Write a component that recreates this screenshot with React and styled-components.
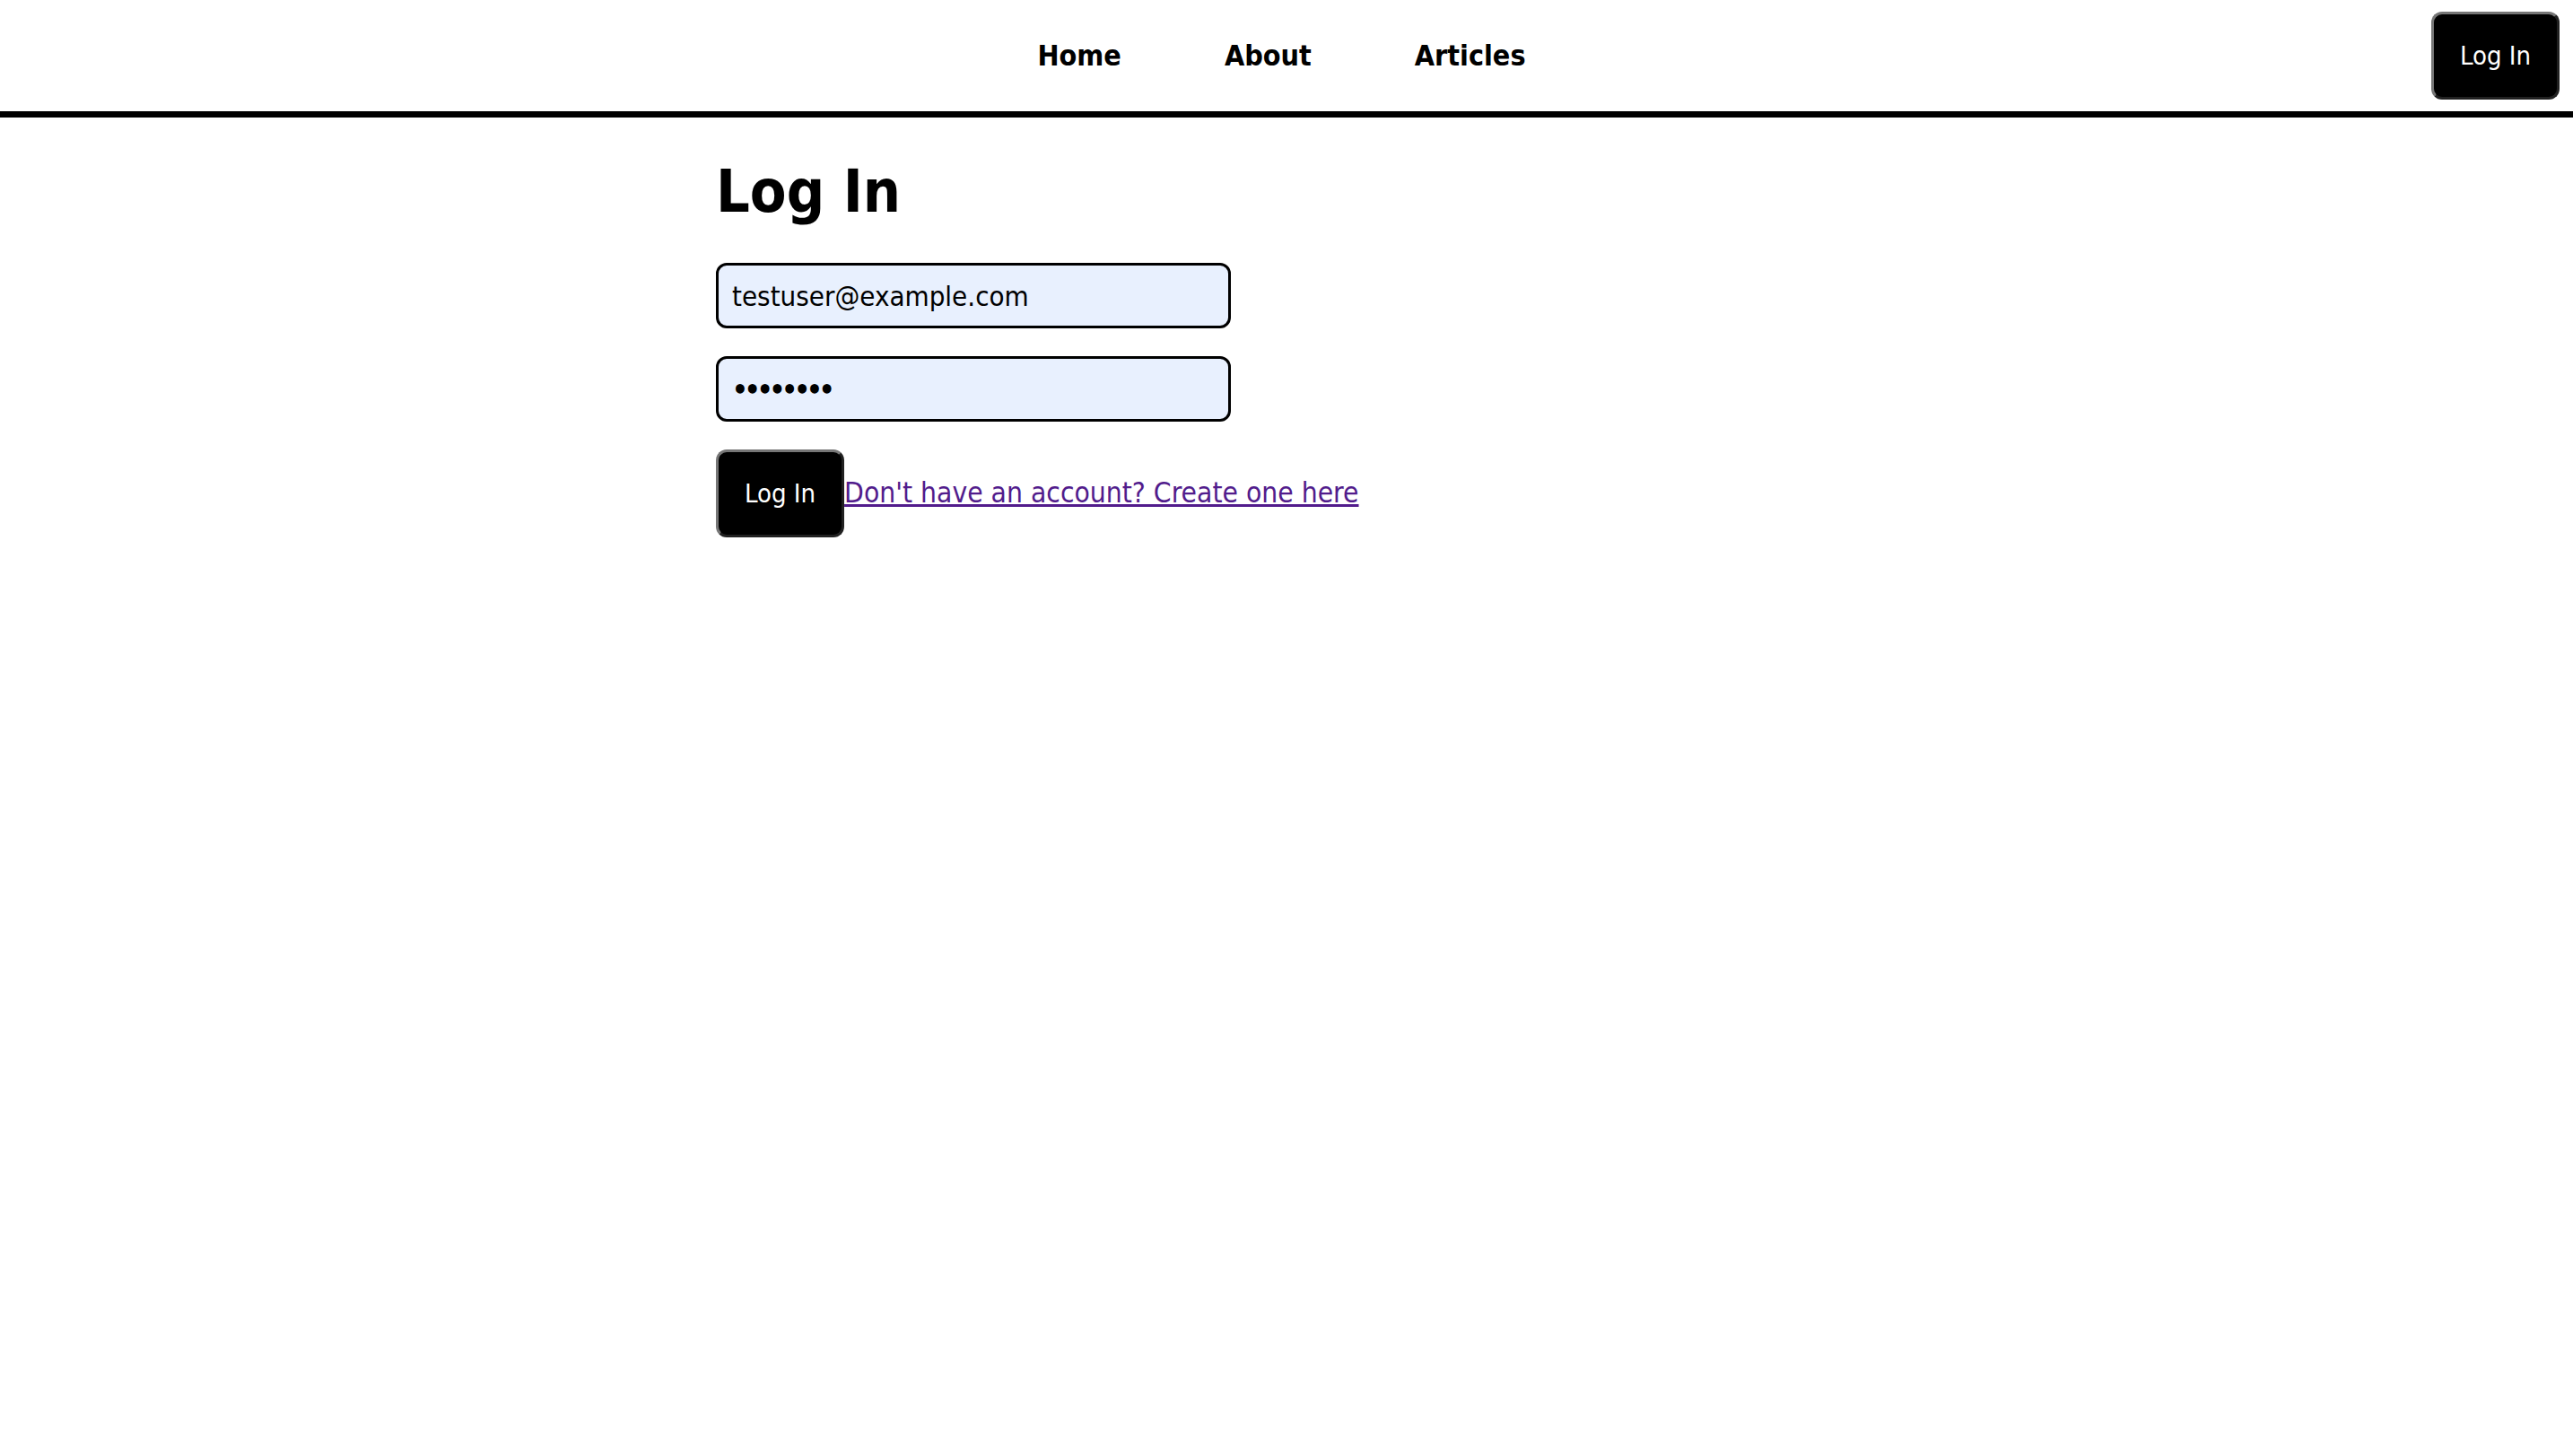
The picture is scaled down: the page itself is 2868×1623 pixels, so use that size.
import React from "react";
import styled, { createGlobalStyle } from "styled-components";

const GlobalStyle = createGlobalStyle`
  body {
    margin: 0;
    background: #ffffff;
    color: #000000;
    font-family: "DejaVu Sans Condensed", "DejaVu Sans", sans-serif;
    font-stretch: condensed;
    font-size: 32px;
  }
`;

const Header = styled.header`
  display: grid;
  grid-template-columns: 1fr auto 1fr;
  align-items: center;
  height: 124px;
  padding-right: 15px;
  border-bottom: 7px solid #000000;
`;

const NavLinks = styled.nav`
  grid-column: 2;
  display: flex;
  gap: 115px;
  margin-left: 4px;
`;

const NavLink = styled.a`
  color: #000000;
  font-weight: bold;
  font-size: 32px;
  text-decoration: none;
`;

// 검은 버튼 (헤더, 폼 공용)
const Button = styled.button`
  justify-self: end;
  padding: 29px;
  border: 3px outset #767676;
  border-radius: 12px;
  background: #000000;
  color: #ffffff;
  font-family: inherit;
  font-stretch: condensed;
  font-size: 29px;
  line-height: normal;
  cursor: pointer;
`;

const Main = styled.main`
  box-sizing: border-box;
  max-width: 1272px;
  margin: 0 auto;
`;

const Title = styled.h1`
  margin: 44px 0 41px;
  font-size: 66px;
  font-weight: bold;
  line-height: normal;
`;

const Form = styled.form`
  display: flex;
  flex-direction: column;
  align-items: flex-start;
  gap: 31px;
`;

const Input = styled.input`
  box-sizing: border-box;
  width: 574px;
  height: 73px;
  padding: 0 15px;
  border: 3px solid #000000;
  border-radius: 12px;
  background: #e8f0fe;
  color: #000000;
  font-family: inherit;
  font-stretch: condensed;
  font-size: 31px;
  font-weight: ${(props) => (props.type === "password" ? "bold" : "normal")};
  letter-spacing: ${(props) => (props.type === "password" ? "-4px" : "normal")};
  outline: none;
`;

const Actions = styled.div`
  display: flex;
  align-items: baseline;
`;

const SignupLink = styled.a`
  color: #521c8c;
  font-size: 31.5px;
  text-decoration: underline;
`;

const App = () => {
  return (
    <React.Fragment>
      <GlobalStyle />
      <Header>
        <NavLinks>
          <NavLink href="#home">Home</NavLink>
          <NavLink href="#about">About</NavLink>
          <NavLink href="#articles">Articles</NavLink>
        </NavLinks>
        <Button type="button">Log In</Button>
      </Header>
      <Main>
        <Title>Log In</Title>
        <Form onSubmit={(e) => e.preventDefault()}>
          <Input type="email" defaultValue="testuser@example.com" />
          <Input type="password" defaultValue="password" />
          <Actions>
            <Button type="submit">Log In</Button>
            <SignupLink href="#signup">
              Don't have an account? Create one here
            </SignupLink>
          </Actions>
        </Form>
      </Main>
    </React.Fragment>
  );
};

export default App;
